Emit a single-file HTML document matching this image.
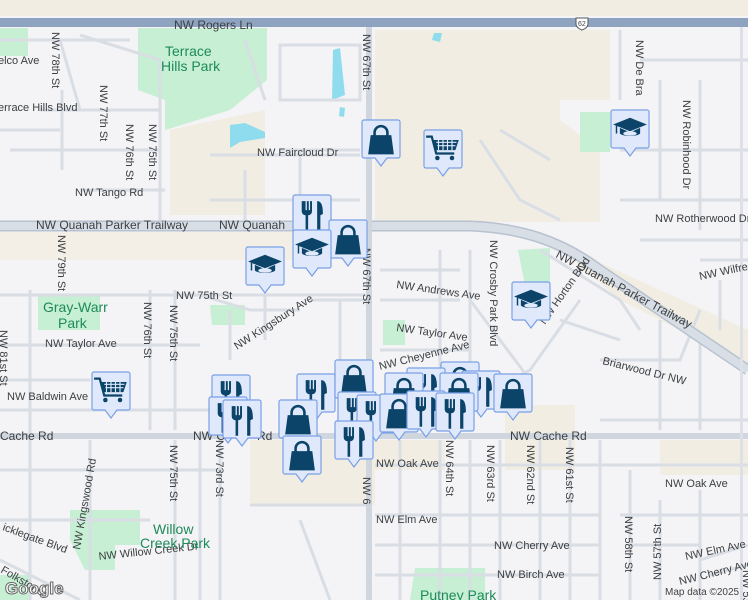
<!DOCTYPE html>
<html><head><meta charset="utf-8"><style>
html,body{margin:0;padding:0;width:748px;height:600px;overflow:hidden;background:#f4f3f5}
svg{display:block}
text{font-family:"Liberation Sans",sans-serif;font-size:11px;fill:#3c4043}
.p{fill:#1e8a5a;font-size:14px}
</style></head><body>
<svg width="748" height="600" viewBox="0 0 748 600" xmlns="http://www.w3.org/2000/svg">
<defs>
<symbol id="bag" viewBox="4 3 28 28"><path d="M13 15 v-3 a5 5 0 0 1 10 0 v3" fill="none" stroke="#0b4468" stroke-width="2"/><path d="M10 14 h16 l2 15 h-20z" fill="#0b4468"/></symbol>
<symbol id="food" viewBox="4 3 28 28"><path d="M10 7 v8 a3 3 0 0 0 3 3 v12 h2 v-12 a3 3 0 0 0 3-3 v-8 h-1.5 v7 h-1 v-7 h-1.5 v7 h-1 v-7 z" fill="#0b4468"/><path d="M22 7 c3.5 0 4.5 4 4.5 10 l-2 1 v12 h-2.5 z" fill="#0b4468"/></symbol>
<symbol id="grad" viewBox="2 3 32 32"><path d="M3 15 l15-6 15 6-15 6z" fill="#0b4468"/><path d="M9 18 v5 c3 3 15 3 18 0 v-5 l-9 4z" fill="#0b4468"/><ellipse cx="18" cy="23" rx="6" ry="2" fill="#dfe9fb"/><path d="M6 16 v7" stroke="#0b4468" stroke-width="1.3"/></symbol>
<symbol id="cart" viewBox="2 3 32 32"><path d="M3 8 h5 l4 15 h16" fill="none" stroke="#0b4468" stroke-width="2"/><path d="M9 11 h23 l-3 9 h-17z" fill="#0b4468"/><path d="M12 13h18M13 16h16M14 11v9M18 11v9M22 11v9M26 11v9" stroke="#dfe9fb" stroke-width="1"/><circle cx="13" cy="27" r="2" fill="#0b4468"/><circle cx="26" cy="27" r="2" fill="#0b4468"/></symbol>
<g id="mk"><path d="M1 0 h35 a2 2 0 0 1 2 2 v34 a2 2 0 0 1-2 2 h-11 l-6 8 -6-8 h-11 a2 2 0 0 1-2-2 v-34 a2 2 0 0 1 2-2z" fill="#dfe9fb" stroke="#7aa0e6" stroke-width="1.2"/></g>
</defs>
<rect x="0" y="0" width="748" height="16" fill="#f2ede2"/>
<path d="M375 30 H560 V120 L600 150 V222 H375Z" fill="#f2ede2"/>
<path d="M560 30 H610 V100 H560Z" fill="#f2ede2"/>
<path d="M170 130 L265 110 L265 215 H170Z" fill="#f2ede2"/>
<path d="M0 232 H300 V260 H0Z" fill="#f3efe6"/>
<path d="M550 240 L748 330 V372 L690 335 L620 300Z" fill="#f2ede2"/>
<path d="M250 440 H375 V505 H250Z" fill="#f2ede2"/>
<path d="M375 440 H445 V470 H375Z" fill="#f2ede2"/>
<path d="M505 405 H575 V470 H505Z" fill="#f2ede2"/>
<path d="M660 440 H748 V475 H660Z" fill="#f2ede2"/>
<path d="M138 28 H267 V80 L230 110 L165 130 L165 100 L138 90Z" fill="#c6efd3"/>
<rect x="0" y="28" width="28" height="28" fill="#c6efd3"/>
<rect x="38" y="295" width="62" height="35" fill="#c6efd3"/>
<path d="M70 510 H140 V545 L115 545 V570 H85 L70 540Z" fill="#c6efd3"/>
<rect x="383" y="320" width="22" height="25" fill="#c6efd3"/>
<path d="M518 250 L550 248 V285 H525Z" fill="#c6efd3"/>
<rect x="580" y="112" width="30" height="40" fill="#c6efd3"/>
<path d="M210 305 H245 V325 H212Z" fill="#c6efd3"/>
<path d="M0 575 H30 V600 H0Z" fill="#c6efd3"/>
<path d="M415 568 H485 V600 H410Z" fill="#c6efd3"/>
<path d="M333 50 L340 48 L345 95 L332 100Z" fill="#8fdcee"/>
<path d="M230 125 L245 123 L265 132 L265 138 L240 142 L230 148Z" fill="#8fdcee"/>
<path d="M340 107 L345 108 L344 117 L339 116Z" fill="#8fdcee"/>
<path d="M434 33 L442 33 L440 42 L432 40Z" fill="#8fdcee"/>
<g fill="none" stroke="#d9dee5" stroke-width="3">
<path d="M0 40 H130 M40 110 H160 L160 220 M0 130 H60 M10 150 H160 M80 190 H165 M62 90 V170 M60 40 L80 110 M80 35 L160 60 L160 110 M245 40 L265 100 M280 45 H360 V100 H280Z M280 150 H360 M210 155 H360 M210 200 H360 M245 170 V225 M300 150 V220"/>
<path d="M0 295 H370 M0 345 H200 M0 380 H90 M0 410 H210 M30 290 V600 M150 290 V430 M175 290 V430 M200 295 L250 310 L300 310 M230 310 V360 M265 295 V340 M310 300 H370 M340 300 V360"/>
<path d="M0 470 H220 M0 520 H150 M0 560 L80 600 M90 440 V600 M175 440 V600 M200 440 V600 M220 440 V600 M250 505 H370 M300 520 L330 600"/>
<path d="M375 465 H748 M375 515 H600 M375 545 H600 M375 575 H600 M400 440 V600 M440 440 V600 M470 440 V600 M500 440 V600 M540 440 V600 M570 440 V600 M600 440 V600 M630 470 V600 M660 500 V600 M700 490 V600 M620 515 H748 M630 545 H700 M700 560 L748 545 M710 575 L748 565"/>
<path d="M380 270 H460 M380 300 H460 M380 350 H470 M440 250 V380 M470 250 V400 L530 370 L580 300 M470 300 L530 380 M540 250 L620 300 L640 330 M560 320 L620 340 M600 360 H680 L700 310 M660 320 V430 M700 340 V430 M600 420 H748"/>
<path d="M620 30 V100 M640 60 H748 M660 80 V200 M700 80 V230 M620 150 H748 M660 200 H748 M620 200 H660 M640 240 L748 240 M700 260 L748 260 M720 280 V330 M480 140 L520 200 L560 220 M500 130 L550 160"/>
</g>
<rect x="0" y="18" width="748" height="9" fill="#8ea3bf"/>
<path d="M0 226 H470 C520 228 560 240 600 270 L748 370" fill="none" stroke="#b7c2cf" stroke-width="11"/>
<path d="M0 226 H470 C520 228 560 240 600 270 L748 370" fill="none" stroke="#d8dee6" stroke-width="8"/>
<rect x="366" y="27" width="6" height="573" fill="#cfd6de"/>
<rect x="0" y="433" width="748" height="6" fill="#cfd6de"/>
<rect x="740" y="27" width="3" height="573" fill="#dde1e7"/>
<path d="M576 18 h12 v6 c0 4-6 6-6 6 s-6-2-6-6z" fill="#fff" stroke="#555" stroke-width="1"/>
<text x="578" y="26" style="font-size:7px">62</text>
<text x="174" y="29" style="font-size:12px">NW Rogers Ln</text>
<text x="-2" y="64">elco Ave</text>
<text x="-2" y="111">errace Hills Blvd</text>
<text x="75" y="196">NW Tango Rd</text>
<text x="257" y="156">NW Faircloud Dr</text>
<text x="36" y="229" style="font-size:12px">NW Quanah Parker Trailway</text>
<text x="219" y="229" style="font-size:12px">NW Quanah</text>
<text x="176" y="299">NW 75th St</text>
<text x="45" y="347">NW Taylor Ave</text>
<text x="7" y="400">NW Baldwin Ave</text>
<text x="0" y="440" style="font-size:12px">Cache Rd</text>
<text x="193" y="440" style="font-size:12px">NW C</text>
<text x="257" y="440" style="font-size:12px">Rd</text>
<text x="510" y="440" style="font-size:12px">NW Cache Rd</text>
<text x="376" y="467">NW Oak Ave</text>
<text x="665" y="487">NW Oak Ave</text>
<text x="376" y="523">NW Elm Ave</text>
<text x="494" y="549">NW Cherry Ave</text>
<text x="497" y="578">NW Birch Ave</text>
<text x="655" y="222">NW Rotherwood Dr</text>
<text x="396" y="331" transform="rotate(8 396 331)">NW Taylor Ave</text>
<text x="396" y="288" transform="rotate(8 396 288)">NW Andrews Ave</text>
<text x="380" y="370" transform="rotate(-14 380 370)">NW Cheyenne Ave</text>
<text x="602" y="364" transform="rotate(14 602 364)">Briarwood Dr NW</text>
<text x="555" y="257" transform="rotate(28 555 257)" style="font-size:12px">NW Quanah Parker Trailway</text>
<text x="700" y="280" transform="rotate(-12 700 280)">NW Wilfred</text>
<text x="686" y="560" transform="rotate(-12 686 560)">NW Elm Ave</text>
<text x="680" y="585" transform="rotate(-14 680 585)">NW Cherry Ave</text>
<text x="237" y="350" transform="rotate(-33 237 350)">NW Kingsbury Ave</text>
<text x="2" y="530" transform="rotate(20 2 530)">icklegate Blvd</text>
<text x="99" y="560" transform="rotate(-6 99 560)">NW Willow Creek Dr</text>
<text x="0" y="572" transform="rotate(30 0 572)">Folkstone</text>
<g transform="rotate(90)">
<text x="34" y="-363">NW 67th St</text>
<text x="248" y="-363">NW 67th St</text>
<text x="477" y="-363">NW 6</text>
<text x="32" y="-52">NW 78th St</text>
<text x="85" y="-100">NW 77th St</text>
<text x="124" y="-126">NW 76th St</text>
<text x="124" y="-149">NW 75th St</text>
<text x="235" y="-58">NW 79th St</text>
<text x="302" y="-144">NW 76th St</text>
<text x="305" y="-170">NW 75th St</text>
<text x="330" y="0">NW 81st St</text>
<text x="445" y="-170">NW 75th St</text>
<text x="440" y="-216">NW 73rd St</text>
<text x="440" y="-446">NW 64th St</text>
<text x="445" y="-487">NW 63rd St</text>
<text x="445" y="-527">NW 62nd St</text>
<text x="447" y="-566">NW 61st St</text>
<text x="516" y="-625">NW 58th St</text>
<text x="240" y="-490">NW Crosby Park Blvd</text>
<text x="570" y="-743">NW 53rd</text>
<text x="40" y="-636">NW De Bra</text>
<text x="100" y="-683">NW Robinhood Dr</text>
</g>
<text x="661" y="580" transform="rotate(-90 661 580)">NW 57th St</text>
<text x="545" y="325" transform="rotate(-55 545 325)">NW Horton Blvd</text>
<text x="80" y="550" transform="rotate(-80 80 550)">NW Kingswood Rd</text>
<text x="165" y="56" class="p">Terrace</text>
<text x="161" y="71" class="p">Hills Park</text>
<text x="43" y="312" class="p">Gray-Warr</text>
<text x="58" y="328" class="p">Park</text>
<text x="153" y="534" class="p">Willow</text>
<text x="140" y="548" class="p">Creek Park</text>
<text x="420" y="600" class="p">Putney Park</text>
<text x="665" y="595" style="font-size:10px;fill:#444">Map data ©2025</text>
<text x="5" y="594" style="font-size:17px;font-weight:bold;fill:#fff;stroke:#666;stroke-width:1">Google</text>
<g>
<use href="#mk" x="362" y="120"/><use href="#bag" x="363" y="121" width="36" height="36"/>
<use href="#mk" x="424" y="130"/><use href="#cart" x="425" y="131" width="36" height="36"/>
<use href="#mk" x="611" y="110"/><use href="#grad" x="612" y="111" width="36" height="36"/>
<use href="#mk" x="293" y="195"/><use href="#food" x="294" y="196" width="36" height="36"/>
<use href="#mk" x="329" y="220"/><use href="#bag" x="330" y="221" width="36" height="36"/>
<use href="#mk" x="293" y="230"/><use href="#grad" x="294" y="231" width="36" height="36"/>
<use href="#mk" x="246" y="247"/><use href="#grad" x="247" y="248" width="36" height="36"/>
<use href="#mk" x="512" y="282"/><use href="#grad" x="513" y="283" width="36" height="36"/>
<use href="#mk" x="92" y="372"/><use href="#cart" x="93" y="373" width="36" height="36"/>
<use href="#mk" x="212" y="375"/><use href="#food" x="213" y="376" width="36" height="36"/>
<use href="#mk" x="209" y="397"/><use href="#food" x="210" y="398" width="36" height="36"/>
<use href="#mk" x="223" y="400"/><use href="#food" x="224" y="401" width="36" height="36"/>
<use href="#mk" x="297" y="374"/><use href="#food" x="298" y="375" width="36" height="36"/>
<use href="#mk" x="335" y="360"/><use href="#bag" x="336" y="361" width="36" height="36"/>
<use href="#mk" x="279" y="400"/><use href="#bag" x="280" y="401" width="36" height="36"/>
<use href="#mk" x="283" y="436"/><use href="#bag" x="284" y="437" width="36" height="36"/>
<use href="#mk" x="441" y="362"/><use href="#bag" x="442" y="363" width="36" height="36"/>
<use href="#mk" x="407" y="368"/><use href="#food" x="408" y="369" width="36" height="36"/>
<use href="#mk" x="462" y="371"/><use href="#food" x="463" y="372" width="36" height="36"/>
<use href="#mk" x="385" y="373"/><use href="#bag" x="386" y="374" width="36" height="36"/>
<use href="#mk" x="440" y="373"/><use href="#bag" x="441" y="374" width="36" height="36"/>
<use href="#mk" x="494" y="374"/><use href="#bag" x="495" y="375" width="36" height="36"/>
<use href="#mk" x="338" y="392"/><use href="#food" x="339" y="393" width="36" height="36"/>
<use href="#mk" x="357" y="395"/><use href="#food" x="358" y="396" width="36" height="36"/>
<use href="#mk" x="380" y="394"/><use href="#bag" x="381" y="395" width="36" height="36"/>
<use href="#mk" x="407" y="391"/><use href="#food" x="408" y="392" width="36" height="36"/>
<use href="#mk" x="436" y="393"/><use href="#food" x="437" y="394" width="36" height="36"/>
<use href="#mk" x="335" y="421"/><use href="#food" x="336" y="422" width="36" height="36"/>
</g>
</svg>
</body></html>
